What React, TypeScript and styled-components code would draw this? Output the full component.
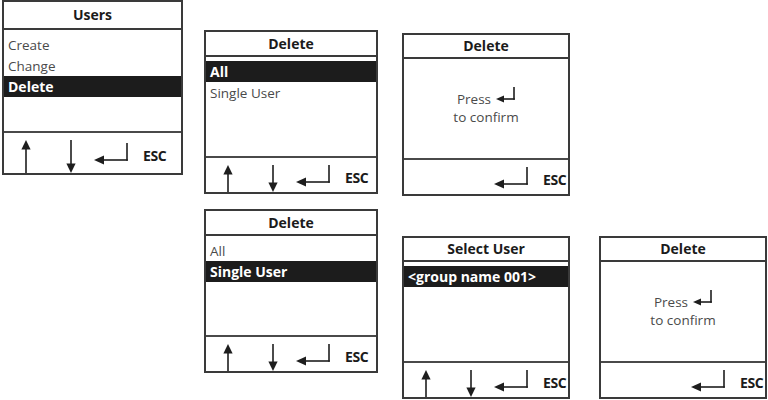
import React from "react";
import styled, { createGlobalStyle } from "styled-components";

const GlobalStyle = createGlobalStyle`
  html, body {
    margin: 0;
    padding: 0;
    background: #ffffff;
  }
  body {
    font-family: "Open Sans", "Noto Sans", "DejaVu Sans", sans-serif;
    color: #222;
  }
`;

const INK = "#1e1e1e";

// arrows for the keypad row
const UpArrow = ({ h }: { h: number }) => (
  <svg width="10" height={h} viewBox={`0 0 10 ${h}`}>
    <polygon points="5,0 0.4,9.5 9.6,9.5" fill={INK} />
    <line x1="5" y1="8" x2="5" y2={h} stroke={INK} strokeWidth="1.6" />
  </svg>
);

const DownArrow = ({ h }: { h: number }) => (
  <svg width="10" height={h} viewBox={`0 0 10 ${h}`}>
    <line x1="5" y1="0" x2="5" y2={h - 8} stroke={INK} strokeWidth="1.6" />
    <polygon points={`5,${h} 0.4,${h - 9.5} 9.6,${h - 9.5}`} fill={INK} />
  </svg>
);

// return key: stem down on the right, then left to an arrow head
const EnterIcon = ({ w, h, head }: { w: number; h: number; head: number }) => {
  const y = h - head / 2 - 0.5;
  return (
    <svg width={w} height={h} viewBox={`0 0 ${w} ${h}`}>
      <line x1={w - 1} y1="0" x2={w - 1} y2={y + 0.8} stroke={INK} strokeWidth="1.6" />
      <line x1={head} y1={y} x2={w - 0.2} y2={y} stroke={INK} strokeWidth="1.6" />
      <polygon
        points={`0,${y} ${head + 1},${y - head / 2} ${head + 1},${y + head / 2}`}
        fill={INK}
      />
    </svg>
  );
};

type Dim = { $w: number; $h: number };

const Canvas = styled.div`
  display: flex;
  align-items: flex-start;
  width: 768px;
  height: 400px;
  overflow: hidden;
`;

const Column = styled.div<{ $left: number; $top: number; $gap: number }>`
  display: flex;
  flex-direction: column;
  margin-left: ${(p) => p.$left}px;
  padding-top: ${(p) => p.$top}px;
  gap: ${(p) => p.$gap}px;
`;

const Screen = styled.section<Dim>`
  box-sizing: border-box;
  width: ${(p) => p.$w}px;
  height: ${(p) => p.$h}px;
  border: 2px solid #3a3a3a;
  background: #fff;
  display: flex;
  flex-direction: column;
`;

const Header = styled.div<{ $h: number }>`
  box-sizing: border-box;
  height: ${(p) => p.$h}px;
  flex: none;
  border-bottom: 2px solid #3a3a3a;
  display: flex;
  align-items: center;
  justify-content: center;
  padding-bottom: 1px;
  font-weight: 700;
  font-size: 14px;
  color: #1b1b1b;
`;

const Body = styled.div`
  flex: 1;
  padding-top: 4px;
  display: flex;
  flex-direction: column;
`;

const Item = styled.div<{ $active?: boolean }>`
  height: 21px;
  padding-left: 4px;
  display: flex;
  align-items: center;
  white-space: nowrap;
  font-size: ${(p) => (p.$active ? "14px" : "13.5px")};
  font-weight: ${(p) => (p.$active ? 700 : 400)};
  color: ${(p) => (p.$active ? "#fff" : "#4a4a4a")};
  background: ${(p) => (p.$active ? "#1c1c1c" : "transparent")};
`;

const Message = styled.div`
  flex: 1;
  display: flex;
  flex-direction: column;
  align-items: center;
  justify-content: center;
  padding-bottom: 4px;
  font-size: 13.5px;
  line-height: 18px;
  color: #4a4a4a;
`;

const PressLine = styled.div`
  display: flex;
  align-items: flex-end;
  gap: 5px;
  & > svg {
    margin-bottom: 5px;
  }
`;

const Footer = styled.div<{ $h: number }>`
  box-sizing: border-box;
  height: ${(p) => p.$h}px;
  flex: none;
  border-top: 2px solid #4a4a4a;
  display: grid;
  grid-template-columns: 43px 47px 36px 1fr;
  align-items: center;
`;

const ArrowSlot = styled.div`
  align-self: end;
  justify-self: center;
  display: flex;
  line-height: 0;
`;

const EnterSlot = styled.div`
  display: flex;
  line-height: 0;
  margin-top: 2px;
`;

const Esc = styled.span`
  padding-left: 13px;
  font-weight: 700;
  font-size: 14px;
  letter-spacing: -0.4px;
  color: #1b1b1b;
  margin-top: 4px;
`;

type Size = { w: number; h: number; head: number; foot: number };

const Keys = ({ foot, arrows = true }: { foot: number; arrows?: boolean }) => (
  <Footer $h={foot}>
    <ArrowSlot>{arrows && <UpArrow h={foot - 9} />}</ArrowSlot>
    <ArrowSlot>{arrows && <DownArrow h={foot - 9} />}</ArrowSlot>
    <EnterSlot>
      <EnterIcon w={34} h={22} head={9} />
    </EnterSlot>
    <Esc>ESC</Esc>
  </Footer>
);

const MenuScreen = ({
  size,
  title,
  items,
  active,
}: {
  size: Size;
  title: string;
  items: string[];
  active: number;
}) => (
  <Screen $w={size.w} $h={size.h}>
    <Header $h={size.head}>{title}</Header>
    <Body>
      {items.map((label, i) => (
        <Item key={label} $active={i === active}>
          {label}
        </Item>
      ))}
    </Body>
    <Keys foot={size.foot} />
  </Screen>
);

const ConfirmScreen = ({ size }: { size: Size }) => (
  <Screen $w={size.w} $h={size.h}>
    <Header $h={size.head}>Delete</Header>
    <Message>
      <PressLine>
        <span>Press</span>
        <EnterIcon w={19} h={16} head={7} />
      </PressLine>
      <span>to confirm</span>
    </Message>
    <Keys foot={size.foot} arrows={false} />
  </Screen>
);

const big: Size = { w: 181, h: 175, head: 28, foot: 42 };
const wide: Size = { w: 174, h: 164, head: 25, foot: 36 };
const narrow: Size = { w: 168, h: 163, head: 24, foot: 36 };

export default function App() {
  return (
    <>
      <GlobalStyle />
      <Canvas>
        <Column $left={2} $top={0} $gap={0}>
          <MenuScreen size={big} title="Users" items={["Create", "Change", "Delete"]} active={2} />
        </Column>
        <Column $left={21} $top={30} $gap={15}>
          <MenuScreen size={wide} title="Delete" items={["All", "Single User"]} active={0} />
          <MenuScreen size={wide} title="Delete" items={["All", "Single User"]} active={1} />
        </Column>
        <Column $left={24} $top={33} $gap={40}>
          <ConfirmScreen size={narrow} />
          <MenuScreen size={narrow} title="Select User" items={["<group name 001>"]} active={0} />
        </Column>
        <Column $left={29} $top={236} $gap={0}>
          <ConfirmScreen size={narrow} />
        </Column>
      </Canvas>
    </>
  );
}
